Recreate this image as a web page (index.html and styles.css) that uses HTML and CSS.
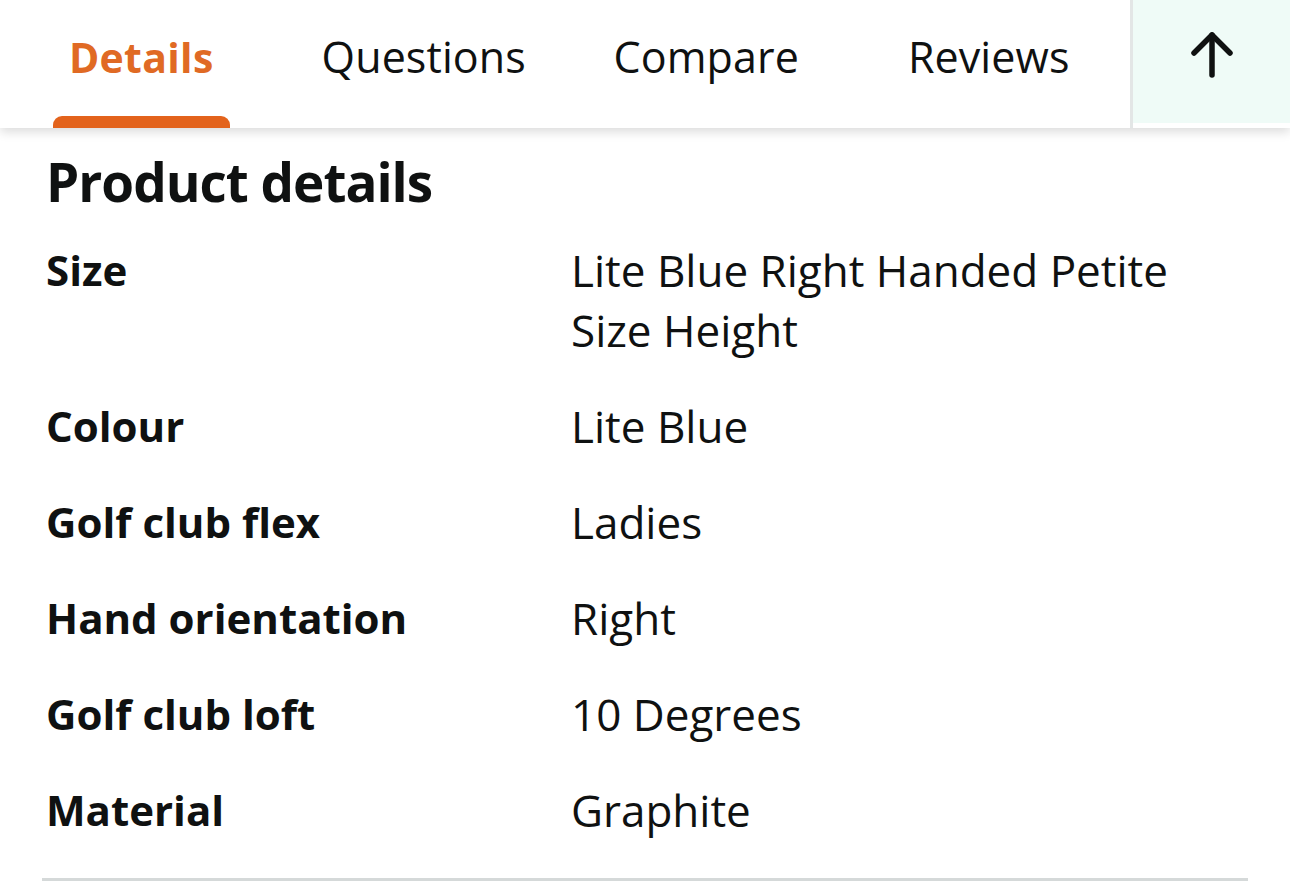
FILE: index.html
```html
<!DOCTYPE html>
<html lang="en">
<head>
<meta charset="utf-8">
<title>Product details</title>
<link rel="stylesheet" href="styles.css">
</head>
<body>
<nav class="tabbar">
  <div class="tabs">
    <a class="tab tab-active"><span class="tab-label">Details</span><span class="tab-indicator"></span></a>
    <a class="tab"><span class="tab-label">Questions</span></a>
    <a class="tab"><span class="tab-label">Compare</span></a>
    <a class="tab"><span class="tab-label">Reviews</span></a>
  </div>
  <div class="tab-sep"></div>
  <button class="top-btn" aria-label="Back to top">
    <svg width="44" height="50" viewBox="0 0 44 50" fill="none" stroke="#0f1111" stroke-width="5.5" stroke-linecap="round" stroke-linejoin="round">
      <path d="M22 45 V5"/>
      <path d="M4 23 L22 5 L40 23"/>
    </svg>
  </button>
</nav>

<main class="content">
  <h2 class="heading">Product details</h2>
  <dl class="details">
    <div class="row"><dt>Size</dt><dd>Lite Blue Right Handed Petite Size Height</dd></div>
    <div class="row"><dt>Colour</dt><dd>Lite Blue</dd></div>
    <div class="row"><dt>Golf club flex</dt><dd>Ladies</dd></div>
    <div class="row"><dt>Hand orientation</dt><dd>Right</dd></div>
    <div class="row"><dt>Golf club loft</dt><dd>10 Degrees</dd></div>
    <div class="row"><dt>Material</dt><dd>Graphite</dd></div>
  </dl>
  <hr class="divider">
</main>
</body>
</html>
```
FILE: styles.css
```css
* { box-sizing: border-box; }
html, body { margin: 0; padding: 0; background: #ffffff; }
body {
  font-family: "Open Sans", "Noto Sans", sans-serif;
  color: #0f1111;
  width: 1290px;
  overflow: hidden;
}

.tabbar {
  display: flex;
  height: 128px;
  background: #ffffff;
  box-shadow: 0 4px 10px rgba(0, 0, 0, 0.14);
  position: relative;
  z-index: 1;
}
.tabs {
  display: grid;
  grid-template-columns: repeat(4, 1fr);
  width: 1130px;
}
.tab {
  display: flex;
  flex-direction: column;
  align-items: center;
  padding-top: 27px;
  color: #0f1111;
  text-decoration: none;
}
.tab-label {
  font-size: 43px;
  line-height: 60px;
  font-weight: 400;
  letter-spacing: 0.1px;
}
.tab-active .tab-label {
  color: #e06a24;
  font-weight: 700;
  font-size: 41px;
  letter-spacing: 0.3px;
}
.tab-indicator {
  margin-top: auto;
  width: 177px;
  height: 12px;
  background: #e3631c;
  border-radius: 9px 9px 0 0;
}
.tab-sep {
  width: 3px;
  background: #e3e6e6;
}
.top-btn {
  flex: 1;
  border: 0;
  margin: 0 0 5px 0;
  padding: 0;
  background: #effbf7;
  display: flex;
  align-items: flex-start;
  justify-content: center;
  padding-top: 30px;
}

.content {
  padding: 22px 42px 0 46px;
}
.heading {
  margin: 0;
  font-size: 53px;
  line-height: 64px;
  font-weight: 700;
  letter-spacing: -1px;
}
.details {
  margin: 8px 0 0 0;
}
.row {
  display: grid;
  grid-template-columns: 525px 1fr;
  padding: 18px 0;
}
.row dt {
  font-size: 42px;
  line-height: 60px;
  font-weight: 700;
  letter-spacing: 0;
}
.row dd {
  margin: 0;
  font-size: 44px;
  line-height: 60px;
  font-weight: 400;
}
.divider {
  margin: 20px 0 0 -4px;
  border: 0;
  height: 3px;
  background: #d5d9d9;
}
```
